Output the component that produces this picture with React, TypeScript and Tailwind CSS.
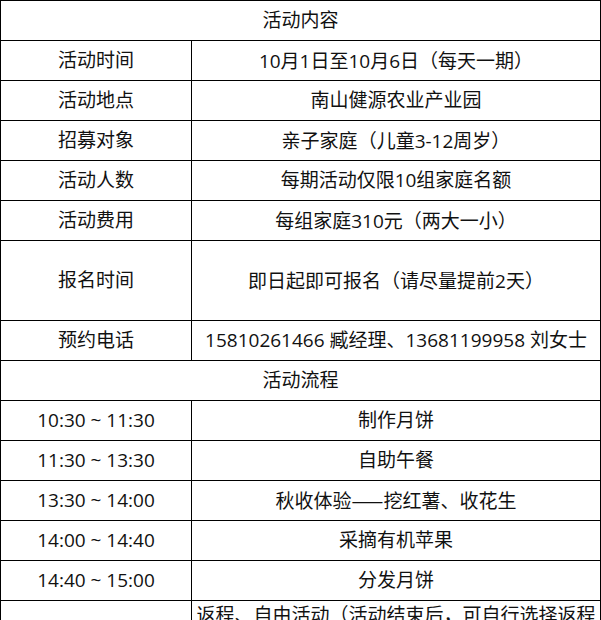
const info = [
    { label: "活动时间", value: "10月1日至10月6日（每天一期）", tall: false },
    { label: "活动地点", value: "南山健源农业产业园", tall: false },
    { label: "招募对象", value: "亲子家庭（儿童3-12周岁）", tall: false },
    { label: "活动人数", value: "每期活动仅限10组家庭名额", tall: false },
    { label: "活动费用", value: "每组家庭310元（两大一小）", tall: false },
    { label: "报名时间", value: "即日起即可报名（请尽量提前2天）", tall: true },
    { label: "预约电话", value: "15810261466 臧经理、13681199958 刘女士", tall: false },
];

const schedule = [
    { time: "10:30 ~ 11:30", item: "制作月饼" },
    { time: "11:30 ~ 13:30", item: "自助午餐" },
    { time: "13:30 ~ 14:00", item: "秋收体验——挖红薯、收花生" },
    { time: "14:00 ~ 14:40", item: "采摘有机苹果" },
    { time: "14:40 ~ 15:00", item: "分发月饼" },
];

const cell = "border border-black text-center align-middle p-0";

// full-width parens sit centred in the reference font, TC variant does the same;
// the dash should run unbroken, so it takes the SC face
function Text({ value }: { value: string }) {
    const parts = value.split(/([（）]|——)/);
    return (
        <>
            {parts.map((p, i) => {
                if (p === "（" || p === "）") {
                    return (
                        <span key={i} style={{ fontFamily: '"Noto Sans CJK TC", sans-serif' }}>
                            {p}
                        </span>
                    );
                }
                if (p === "——") {
                    return (
                        <span key={i} style={{ fontFamily: '"Noto Sans CJK SC", sans-serif' }}>
                            {p}
                        </span>
                    );
                }
                return p;
            })}
        </>
    );
}

export default function App() {
    return (
        <div className="h-[620px] w-[601px] overflow-hidden bg-white">
            <table
                className="w-[601px] table-fixed border-collapse text-[19px] leading-[1.2] text-[#111]"
                style={{ fontFamily: '"Open Sans", "Noto Sans CJK SC", sans-serif' }}
            >
                <colgroup>
                    <col className="w-[191px]" />
                    <col />
                </colgroup>
                <tbody>
                    <tr className="h-[40px]">
                        <td colSpan={2} className={cell}>活动内容</td>
                    </tr>
                    {info.map((row) => (
                        <tr key={row.label} className={row.tall ? "h-[80px]" : "h-[40px]"}>
                            <td className={cell}>{row.label}</td>
                            <td className={cell + " whitespace-nowrap"}>
                                <Text value={row.value} />
                            </td>
                        </tr>
                    ))}
                    <tr className="h-[40px]">
                        <td colSpan={2} className={cell}>活动流程</td>
                    </tr>
                    {schedule.map((row) => (
                        <tr key={row.time} className="h-[40px]">
                            <td className={cell}>{row.time}</td>
                            <td className={cell}>
                                <Text value={row.item} />
                            </td>
                        </tr>
                    ))}
                    <tr className="h-[80px]">
                        <td className={cell}></td>
                        <td className={cell + " align-top px-[2px] pt-[2px]"}>
                            <Text value="返程、自由活动（活动结束后，可自行选择返程时间）" />
                        </td>
                    </tr>
                </tbody>
            </table>
        </div>
    );
}
